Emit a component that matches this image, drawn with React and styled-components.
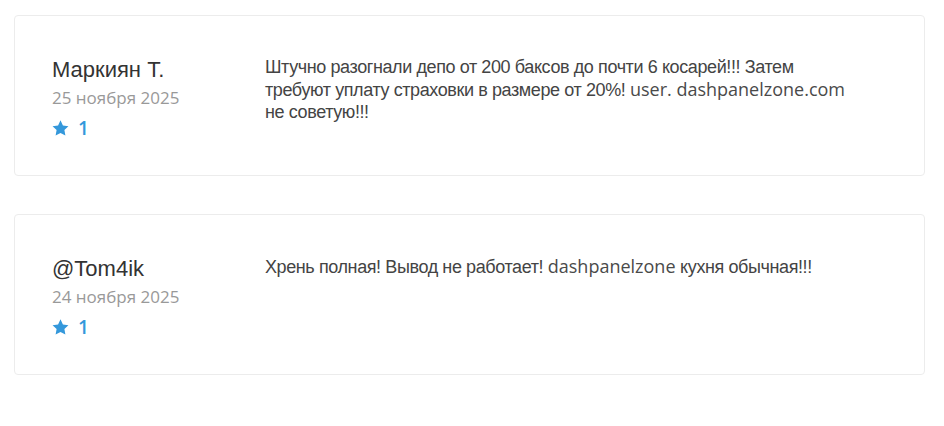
import styled, { createGlobalStyle } from 'styled-components';

const GlobalStyle = createGlobalStyle`
    body {
        margin: 0;
        background: #fff;
        font-family: "Open Sans", "Liberation Sans", sans-serif;
    }
`;

const PAGE = styled.div`
    display: grid;
    gap: 38px;
    padding: 15px 19px 0 14px;
`;

const CARD = styled.div`
    display: grid;
    grid-template-columns: 213px 1fr;
    height: 161px;
    box-sizing: border-box;
    padding: 38px 38px 0 37px;
    border: 1px solid #ececec;
    border-radius: 4px;
    background: #fff;
`;

const AUTHOR = styled.div`
    display: flex;
    flex-direction: column;

    .name {
        font-family: "Liberation Sans", Arial, sans-serif;
        font-size: 22px;
        line-height: 31px;
        color: #333;
    }
    .date {
        font-size: 17px;
        line-height: 26px;
        color: #999;
    }
    .rating {
        display: flex;
        align-items: center;
        gap: 9px;
        margin-top: 5px;
        font-size: 19px;
        font-weight: 600;
        line-height: 24px;
        color: #3498db;
    }
`;

const TEXT = styled.p`
    margin: 0;
    padding-top: 2px;
    max-width: 592px;
    font-family: "Liberation Sans", Arial, sans-serif;
    font-size: 18px;
    letter-spacing: -0.4px;
    line-height: 22px;
    color: #444;

    .latin {
        font-family: "Open Sans", sans-serif;
        font-size: 18px;
        letter-spacing: 0;
        color: #4a4a4a;
    }
`;

const Star = () => (
    <svg width="17" height="17" viewBox="0 0 24 23" fill="currentColor">
        <path d="M12 0l3.4 7.1 7.8 1.1-5.7 5.5 1.4 7.8L12 17.8l-6.9 3.7 1.4-7.8L.8 8.2l7.8-1.1z" />
    </svg>
);

const reviews = [
    {
        name: 'Маркиян Т.',
        date: '25 ноября 2025',
        rating: 1,
        text: (
            <>
                Штучно разогнали депо от 200 баксов до почти 6 косарей!!! Затем требуют уплату
                страховки в размере от 20%! <span className="latin">user. dashpanelzone.com</span>{' '}
                не советую!!!
            </>
        ),
    },
    {
        name: '@Tom4ik',
        date: '24 ноября 2025',
        rating: 1,
        text: (
            <>
                Хрень полная! Вывод не работает! <span className="latin">dashpanelzone</span> кухня
                обычная!!!
            </>
        ),
    },
];

const App = () => {
    return (
        <>
            <GlobalStyle />
            <PAGE>
                {reviews.map((r) => (
                    <CARD key={r.name}>
                        <AUTHOR>
                            <span className="name">{r.name}</span>
                            <span className="date">{r.date}</span>
                            <span className="rating">
                                <Star />
                                {r.rating}
                            </span>
                        </AUTHOR>
                        <TEXT>{r.text}</TEXT>
                    </CARD>
                ))}
            </PAGE>
        </>
    );
};

export default App;
